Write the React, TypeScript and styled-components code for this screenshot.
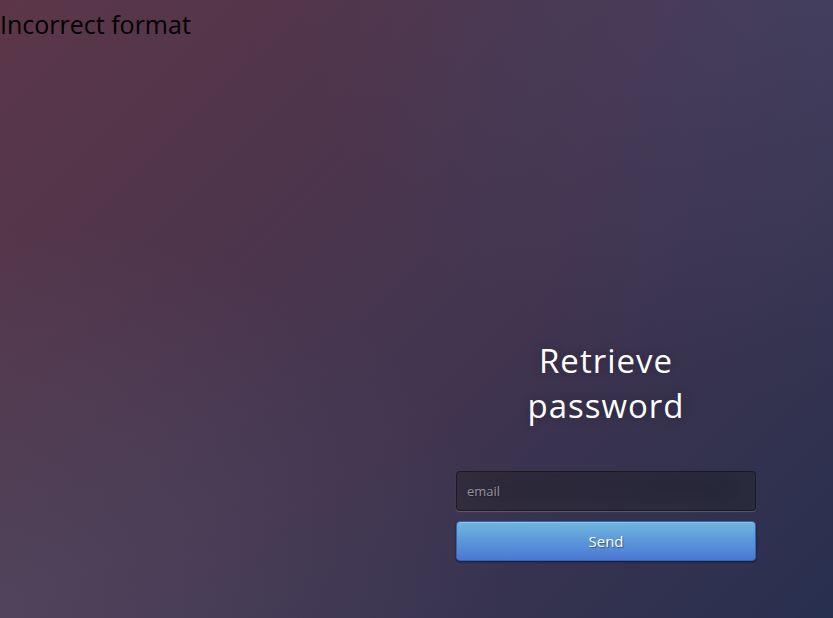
// 找回密码页面
import { FC, useState } from 'react'
import styled, { createGlobalStyle } from 'styled-components'

const GlobalStyle = createGlobalStyle`
	html,
	body {
		margin: 0;
		padding: 0;
		width: 100%;
		height: 100%;
	}
	body {
		font-family: 'Open Sans', 'Liberation Sans', sans-serif;
		background: #45354f;
		background: radial-gradient(
				ellipse farthest-corner at 0% 100%,
				rgba(100, 105, 125, 0.28) 0%,
				rgba(100, 105, 125, 0) 45%
			),
			radial-gradient(
				ellipse farthest-corner at 100% 0%,
				rgba(70, 80, 120, 0.35) 0%,
				rgba(70, 80, 120, 0) 45%
			),
			linear-gradient(135deg, #5c3648 0%, #45354f 50%, #28304f 100%);
	}
	* {
		box-sizing: border-box;
	}
`

// 样式表
const Page = styled.div`
	display: flex;
	flex-direction: column;
	min-height: 100vh;
`

const Notice = styled.div`
	margin-top: 7px;
	font-size: 25px;
	line-height: 34px;
	color: #000;
`

const Login = styled.form`
	display: flex;
	flex-direction: column;
	width: 300px;
	margin: 297px 0 0 456px;
`

const Title = styled.h1`
	margin: 0 0 43px;
	font-size: 33px;
	font-weight: 400;
	line-height: 45px;
	letter-spacing: 1px;
	text-align: center;
	color: #fff;
	text-shadow: 0 0 10px rgba(0, 0, 0, 0.3);
`

const Input = styled.input`
	width: 100%;
	height: 40px;
	margin-bottom: 10px;
	padding: 10px;
	font-family: inherit;
	font-size: 13px;
	color: #fff;
	text-shadow: 1px 1px 1px rgba(0, 0, 0, 0.3);
	background: rgba(0, 0, 0, 0.3);
	border: 1px solid rgba(0, 0, 0, 0.3);
	border-radius: 4px;
	outline: none;
	box-shadow: inset 0 -5px 45px rgba(100, 100, 100, 0.2), 0 1px 1px rgba(255, 255, 255, 0.2);
	&::placeholder {
		color: rgba(255, 255, 255, 0.5);
	}
`

const SendButton = styled.button`
	width: 100%;
	height: 40px;
	padding: 9px 14px;
	font-family: inherit;
	font-size: 15px;
	color: #fff;
	text-shadow: 1px 1px 1px rgba(0, 0, 0, 0.4);
	background-color: #4a77d4;
	background-image: linear-gradient(to bottom, #6eb6de, #4a77d4);
	border: 1px solid #3762bc;
	border-radius: 4px;
	box-shadow: inset 0 1px 0 rgba(255, 255, 255, 0.2), 0 1px 2px rgba(0, 0, 0, 0.5);
	cursor: pointer;
`

export const App: FC = () => {
	const [email, setEmail] = useState('')
	return (
		<Page>
			<GlobalStyle />
			<Notice>Incorrect format</Notice>
			<Login onSubmit={(e) => e.preventDefault()}>
				<Title>
					Retrieve
					<br />
					password
				</Title>
				<Input
					type="text"
					placeholder="email"
					value={email}
					onChange={(e) => setEmail(e.target.value)}
				/>
				<SendButton type="submit">Send</SendButton>
			</Login>
		</Page>
	)
}

export default App
